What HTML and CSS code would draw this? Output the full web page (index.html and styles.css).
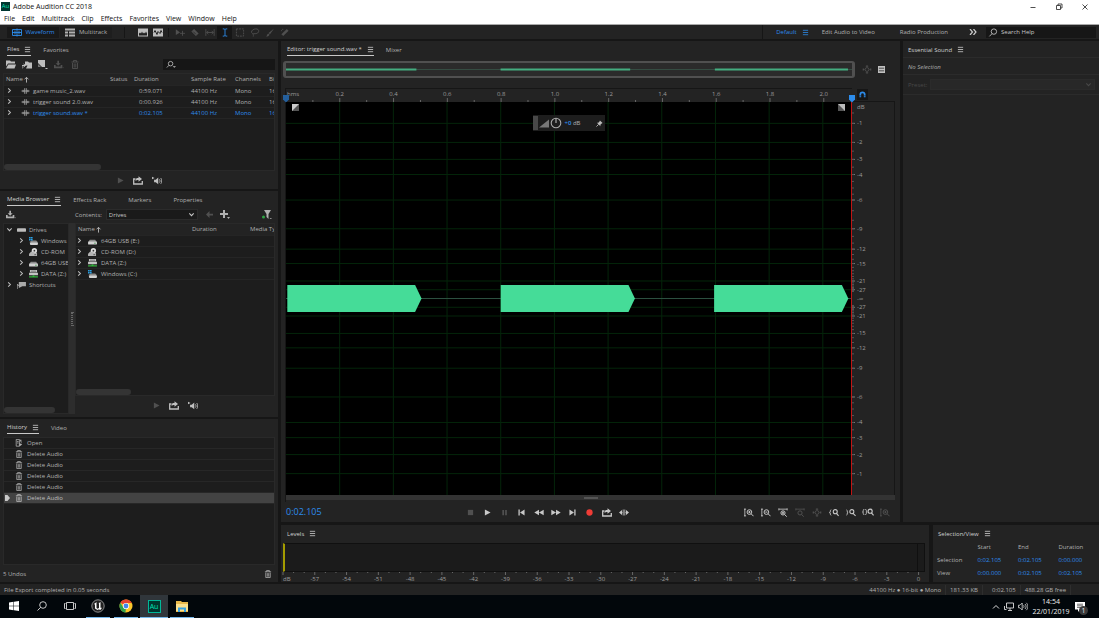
FILE: index.html
```html
<!DOCTYPE html>
<html lang="en">

<head>
  <meta charset="UTF-8" />
  <title>Adobe Audition CC 2018</title>
  <meta name="viewport" content="width=device-width, initial-scale=1.0" />
  <link rel="stylesheet" href="styles.css">
</head>

<body>
  <svg class="sprite" aria-hidden="true">
    <symbol id="i-menu" viewBox="0 0 8 8"><path d="M1 1.500h6M1 4h6M1 6.500h6" fill="none" stroke="currentColor" stroke-width=".9" /></symbol>
    <symbol id="i-chev" viewBox="0 0 8 8"><path d="M2.500 1.500L5 4 2.500 6.500" fill="none" stroke="currentColor" stroke-width="1.200" /></symbol>
    <symbol id="i-down" viewBox="0 0 8 8"><path d="M1.500 2.800L4 5.300l2.500-2.500" fill="none" stroke="currentColor" stroke-width="1.200" /></symbol>
    <symbol id="i-up" viewBox="0 0 8 8"><path d="M4 7.500V1.500M1.800 3.800L4 1.500l2.200 2.300" fill="none" stroke="currentColor" stroke-width="1.100" /></symbol>
    <symbol id="i-wave" viewBox="0 0 10 10"><path d="M0 5h10M2 3.500v3M4 1.500v7M6 1.500v7M8 3.500v3" fill="none" stroke="currentColor" stroke-width="1" /></symbol>
    <symbol id="i-waveform" viewBox="0 0 10 8"><path d="M.5 1h9v6h-9zM0 4h10M3 2v4M5 0v8M7 2v4" fill="none" stroke="currentColor" stroke-width=".9" /></symbol>
    <symbol id="i-tracks" viewBox="0 0 10 8"><path d="M0 0h10v2H0zM0 3h3v2H0zM4 3h6v2H4zM0 6h3v2H0zM4 6h6v2H4z" fill="currentColor" /></symbol>
    <symbol id="i-spectral" viewBox="0 0 10 8"><path d="M0 0h10v8H0z" fill="currentColor" /><path d="M1 5l1-1 1 1 1-2 1 2 1-1 1 1 1-2 1 2v2H1z" fill="#232323" /></symbol>
    <symbol id="i-pitch" viewBox="0 0 10 8"><path d="M0 0h10v8H0z" fill="currentColor" /><path d="M1 4l1-2 2 4 1-3 2 2 1-3 1 2" fill="none" stroke="#232323" /></symbol>
    <symbol id="i-move" viewBox="0 0 12 10"><path d="M1 1l5 4-5 3z" fill="currentColor" /><path d="M6 6h6M9 3v6" stroke="currentColor" /></symbol>
    <symbol id="i-razor" viewBox="0 0 10 10"><path d="M1 4l3-3 5 5-3 3z" fill="currentColor" /><path d="M3 4l3 3" stroke="#232323" stroke-width=".8" /></symbol>
    <symbol id="i-slip" viewBox="0 0 12 10"><path d="M1 1v8M11 1v8M2 5h8M4 3L2 5l2 2M8 3l2 2-2 2" fill="none" stroke="currentColor" /></symbol>
    <symbol id="i-ibeam" viewBox="0 0 10 10"><path d="M2.500 1H4l1 .7L6 1h1.500M5 1.500v7M2.500 9H4l1-.7 1 .7h1.500" fill="none" stroke="currentColor" /></symbol>
    <symbol id="i-marquee" viewBox="0 0 10 10"><path d="M1 1h8v8H1z" fill="none" stroke="currentColor" stroke-dasharray="2 1" /></symbol>
    <symbol id="i-lasso" viewBox="0 0 10 10"><path d="M3 6.500C-1 5 2 1 6 1s4 4 1 5-4-.5-4 1 .5 1 0 2.500" fill="none" stroke="currentColor" /></symbol>
    <symbol id="i-brush" viewBox="0 0 10 10"><path d="M9.500.500L5 7 3.500 5.500zM3 6l1.500 1.500C4 9 2 9.500.500 9.500 2 8.500 1.500 7 3 6z" fill="currentColor" /></symbol>
    <symbol id="i-heal" viewBox="0 0 10 10"><path d="M1 7l6-6 2 2-6 6z" fill="currentColor" /><path d="M1 3.500C1 1 3 1 4 2" fill="none" stroke="currentColor" stroke-dasharray="1 1" /></symbol>
    <symbol id="i-search" viewBox="0 0 10 10"><circle cx="6" cy="4" r="3" fill="none" stroke="currentColor" /><path d="M4 6.200L1 9.300" stroke="currentColor" /></symbol>
    <symbol id="i-find" viewBox="0 0 12 10"><circle cx="5.500" cy="4" r="2.700" fill="none" stroke="currentColor" /><path d="M3.500 6L1 8.700" stroke="currentColor" /><path d="M8 7h4l-2 2z" fill="currentColor" /></symbol>
    <symbol id="i-folder" viewBox="0 0 10 8"><path d="M0 0h4l1 1h4v2H2L0 6z" fill="currentColor" /><path d="M2.300 4H10L8.500 8H0z" fill="currentColor" /></symbol>
    <symbol id="i-import" viewBox="0 0 10 8"><path d="M3 1h3l1 1h3v6H4L5.500 5H3z" fill="currentColor" /><path d="M0 8V5h3M1.500 3.500L3.500 5 1.500 6.500" fill="none" stroke="currentColor" /></symbol>
    <symbol id="i-newfile" viewBox="0 0 10 9"><path d="M0 0h7v7H4L0 3z" fill="currentColor" /><path d="M7 8h3L8.500 9.500z" fill="currentColor" /><path d="M0 4l3 3H0z" fill="#777" /></symbol>
    <symbol id="i-insert" viewBox="0 0 12 9"><path d="M0 5h2v2h6V5h2v4H0zM4 0h2v3h2L5 6 2 3h2z" fill="currentColor" /><path d="M10 8h2l-1 1z" fill="currentColor" /></symbol>
    <symbol id="i-trash" viewBox="0 0 8 9"><path d="M.5 2h7M2.500 2V.5h3V2M1.500 3v5.500h5V3M3.200 3.500V7.500M4.800 3.500V7.500" fill="none" stroke="currentColor" stroke-width=".9" /></symbol>
    <symbol id="i-play" viewBox="0 0 8 8"><path d="M1 .5L7.500 4 1 7.500z" fill="currentColor" /></symbol>
    <symbol id="i-stop" viewBox="0 0 8 8"><path d="M1 1h6v6H1z" fill="currentColor" /></symbol>
    <symbol id="i-pause" viewBox="0 0 8 8"><path d="M1.500 1h2v6h-2zM4.700 1h2v6h-2z" fill="currentColor" /></symbol>
    <symbol id="i-prev" viewBox="0 0 8 8"><path d="M.5 .5h1.500v7H.5zM7.500 .5v7L2.300 4z" fill="currentColor" /></symbol>
    <symbol id="i-next" viewBox="0 0 8 8"><path d="M6 .5h1.500v7H6zM.5 .5v7L5.700 4z" fill="currentColor" /></symbol>
    <symbol id="i-rew" viewBox="0 0 10 8"><path d="M5 1.200v5.600L.3 4zM9.700 1.200v5.600L5 4z" fill="currentColor" /></symbol>
    <symbol id="i-fwd" viewBox="0 0 10 8"><path d="M.3 1.200v5.600L5 4zM5 1.200v5.600L9.700 4z" fill="currentColor" /></symbol>
    <symbol id="i-rec" viewBox="0 0 8 8"><circle cx="4" cy="4" r="3.600" fill="#f03c36" /></symbol>
    <symbol id="i-loop" viewBox="0 0 10 9"><path d="M2.500 3H.7v5h8.600V5" fill="none" stroke="currentColor" stroke-width="1.300" /><path d="M2.500 5c0-2.500 1-3 3-3V.300L9 3 5.500 5.700V4C4 4 3.500 4.300 2.500 5z" fill="currentColor" /></symbol>
    <symbol id="i-skip" viewBox="0 0 10 8"><path d="M0 4l3-2.500v5zM10 4L7 1.500v5z" fill="currentColor" /><path d="M2 4h1.500M6.500 4h2M4.200 1v6M5.800 1v6" stroke="currentColor" stroke-width=".8" /></symbol>
    <symbol id="i-speaker" viewBox="0 0 12 9"><path d="M0 0l3 1.500L0 3z" fill="currentColor" /><path d="M2.500 3.500h2L7.500 1v8L4.500 6.500h-2z" fill="currentColor" /><path d="M9 3c.8 1 .8 3 0 4M10.500 1.500c1.500 2 1.500 5 0 7" fill="none" stroke="currentColor" /></symbol>
    <symbol id="i-back" viewBox="0 0 8 8"><path d="M4 0v3h4v2H4v3L0 4z" fill="currentColor" /></symbol>
    <symbol id="i-plus" viewBox="0 0 10 9"><path d="M3 0h2v3h3v2H5v3H3V5H0V3h3zM7 7h3L8.500 9z" fill="currentColor" /></symbol>
    <symbol id="i-filter" viewBox="0 0 10 9"><path d="M2 0h7L6.500 4v5L4.500 7V4z" fill="currentColor" /><circle cx="1.500" cy="7" r="1.500" fill="#2fa544" /><path d="M7.500 8h2.500l-1.200 1z" fill="currentColor" /></symbol>
    <symbol id="i-drives" viewBox="0 0 10 6"><rect y="1" width="10" height="4" rx="1" fill="#bdbdbd" /></symbol>
    <symbol id="i-disk" viewBox="0 0 10 9"><path d="M2 3h6l2 3H0z" fill="#8b8b8b" /><rect y="5" width="10" height="3.500" rx="1" fill="#d2d2d2" /><path d="M7 7h1.500" stroke="#2d8f3a" /></symbol>
    <symbol id="i-win" viewBox="0 0 10 9"><path d="M3 4h5l2 2H0z" fill="#8b8b8b" /><rect x="1" y="6" width="9" height="3" rx="1" fill="#d2d2d2" /><path d="M0 0h1.800v1.800H0zM2.200 0H4v1.800H2.200zM0 2.200h1.800V4H0zM2.200 2.200H4V4H2.200z" fill="#2aa3e8" /></symbol>
    <symbol id="i-cd" viewBox="0 0 10 9"><circle cx="6" cy="3" r="3" fill="#dedede" /><circle cx="6" cy="3" r="1" fill="#333" /><path d="M0 6.500L2.500 4 9 6v3H0z" fill="#b4b4b4" /><path d="M6 7.500h2" stroke="#1f1f1f" stroke-width=".7" /></symbol>
    <symbol id="i-net" viewBox="0 0 10 9"><path d="M1 0h8v2.500H1zM0 3h10v3H0z" fill="#c4c4c4" /><path d="M2 1.300h6" stroke="#333" stroke-width=".6" /><path d="M4 6h2v1h4v1.500H0V7h4z" fill="#33b33d" /></symbol>
    <symbol id="i-shortcut" viewBox="0 0 10 9"><path d="M2 1h8v5H6L2 8z" fill="#a9a9a9" /><path d="M0 9V4l2 1" fill="none" stroke="#ccc" /></symbol>
    <symbol id="i-open" viewBox="0 0 9 10"><path d="M1 .500h4V9H1zM2 3h2M2 5h2" fill="none" stroke="currentColor" /><path d="M5.500 1h2v5M5 5l3.500 2L5 9.500z" fill="currentColor" /></symbol>
    <symbol id="i-zin" viewBox="0 0 12 10"><path d="M1 .500v9M0 1h2.500M0 9h2.500" stroke="currentColor" /><circle cx="6.500" cy="4.500" r="2.800" fill="none" stroke="currentColor" stroke-width="1.200" /><path d="M8.500 6.500l3 3M5.200 4.500h2.600M6.500 3.200v2.600" stroke="currentColor" stroke-width="1.200" /></symbol>
    <symbol id="i-zout" viewBox="0 0 12 10"><path d="M1 .500v9M0 1h2.500M0 9h2.500" stroke="currentColor" /><circle cx="6.500" cy="4.500" r="2.800" fill="none" stroke="currentColor" stroke-width="1.200" /><path d="M8.500 6.500l3 3M5.200 4.500h2.600" stroke="currentColor" stroke-width="1.200" /></symbol>
    <symbol id="i-zhin" viewBox="0 0 12 10"><path d="M1 1h10M1 0v2.500M11 0v2.500" stroke="currentColor" /><circle cx="6" cy="5.500" r="2.500" fill="none" stroke="currentColor" stroke-width="1.200" /><path d="M8 7.500l2.500 2.500M4.700 5.500h2.600M6 4.200v2.600" stroke="currentColor" stroke-width="1.200" /></symbol>
    <symbol id="i-zhout" viewBox="0 0 12 10"><path d="M1 1h10M1 0v2.500M11 0v2.500" stroke="currentColor" /><circle cx="6" cy="5.500" r="2.500" fill="none" stroke="currentColor" stroke-width="1.200" /><path d="M8 7.500l2.500 2.500" stroke="currentColor" stroke-width="1.200" /></symbol>
    <symbol id="i-zfull" viewBox="0 0 12 10"><circle cx="6" cy="5" r="2.300" fill="none" stroke="currentColor" /><path d="M6 0v2M6 8v2M1 5h2M9 5h2M4.500 1h3M4.500 9h3M1.500 3.500v3M10.500 3.500v3" stroke="currentColor" /></symbol>
    <symbol id="i-zl" viewBox="0 0 12 10"><path d="M2.500 1.500L1.500 3v1.500L.5 5l1 .5V7l1 1.500" fill="none" stroke="currentColor" /><circle cx="7.500" cy="4" r="2.400" fill="none" stroke="currentColor" stroke-width="1.300" /><path d="M9 6l2.500 3" stroke="currentColor" stroke-width="1.300" /></symbol>
    <symbol id="i-zr" viewBox="0 0 12 10"><path d="M.5 1.500l1 1.500v1.500l1 .5-1 .5V7l-1 1.500" fill="none" stroke="currentColor" /><circle cx="7" cy="4" r="2.400" fill="none" stroke="currentColor" stroke-width="1.300" /><path d="M8.500 6l3 3" stroke="currentColor" stroke-width="1.300" /></symbol>
    <symbol id="i-zs" viewBox="0 0 14 10"><path d="M2.500 1.500l-1 1.500v1.500L.5 5l1 .5V7l1 1.500M4 1.500L5 3v1.500l1 .5-1 .5V7L4 8.500" fill="none" stroke="currentColor" /><circle cx="9.500" cy="4" r="2.400" fill="none" stroke="currentColor" stroke-width="1.300" /><path d="M11 6l2.500 3" stroke="currentColor" stroke-width="1.300" /></symbol>
    <symbol id="i-list" viewBox="0 0 8 8"><path d="M0 0h8v8H0z" fill="#c0c0c0" /><path d="M1 2.500h6M1 5.500h6" stroke="#2a2a2a" stroke-width=".9" /></symbol>
    <symbol id="i-magnet" viewBox="0 0 8 8"><path d="M1.500 7V4a2.500 2.500 0 0 1 5 0v3" fill="none" stroke="currentColor" stroke-width="2" /><path d="M.2 5.500h2.600M5.200 5.500h2.600" stroke="#161616" stroke-width=".6" /></symbol>
    <symbol id="i-slope" viewBox="0 0 10 8"><path d="M0 8l10-8v8z" fill="#777" /></symbol>
    <symbol id="i-knob" viewBox="0 0 12 12"><circle cx="6" cy="6" r="4.800" fill="none" stroke="#aaa" stroke-width="1.100" /><path d="M6 1v5" stroke="#aaa" stroke-width="1.200" /></symbol>
    <symbol id="i-pin" viewBox="0 0 8 8"><path d="M4.500.5l3 3-1 .5-1.500 1.500V7L1 3h1.700L4.200 1.500z" fill="#bbb" /><path d="M3 5L.5 7.500" stroke="#bbb" /></symbol>
    <symbol id="i-marker" viewBox="0 0 8 8"><path d="M1 0h6v4.500L4 7.500 1 4.500z" fill="currentColor" /></symbol>
  </svg>

  <header class="titlebar">
    <span class="app-icon">Au</span>
    <span class="app-title">Adobe Audition CC 2018</span>
    <div class="win-controls">
      <button aria-label="Minimize"><svg width="8" height="8" viewBox="0 0 8 8"><path d="M1.500 4.500h5" stroke="#222" stroke-width=".8" /></svg></button>
      <button aria-label="Restore"><svg width="8" height="8" viewBox="0 0 8 8"><path d="M1.500 2.500h4v4h-4zM3 2.500V1h4v4H5.500" fill="none" stroke="#222" stroke-width=".8" /></svg></button>
      <button aria-label="Close"><svg width="8" height="8" viewBox="0 0 8 8"><path d="M1.500 1.500l5 5M6.500 1.500l-5 5" stroke="#222" stroke-width=".8" /></svg></button>
    </div>
  </header>

  <nav class="menubar">
    <a href="#">File</a>
    <a href="#">Edit</a>
    <a href="#">Multitrack</a>
    <a href="#">Clip</a>
    <a href="#">Effects</a>
    <a href="#">Favorites</a>
    <a href="#">View</a>
    <a href="#">Window</a>
    <a href="#">Help</a>
  </nav>

  <div class="toolbar">
    <div class="modes">
      <button class="mode active"><svg class="ic"><use href="#i-waveform" /></svg>Waveform</button>
      <button class="mode"><svg class="ic"><use href="#i-tracks" /></svg>Multitrack</button>
    </div>
    <div class="views">
      <button aria-label="Spectral frequency"><svg class="ic"><use href="#i-spectral" /></svg></button>
      <button aria-label="Spectral pitch"><svg class="ic"><use href="#i-pitch" /></svg></button>
    </div>
    <div class="tools">
      <button aria-label="Move" disabled><svg class="ic"><use href="#i-move" /></svg></button>
      <button aria-label="Razor" disabled><svg class="ic"><use href="#i-razor" /></svg></button>
      <button aria-label="Slip" disabled><svg class="ic"><use href="#i-slip" /></svg></button>
      <button aria-label="Time selection" class="active"><svg class="ic"><use href="#i-ibeam" /></svg></button>
      <button aria-label="Marquee" disabled><svg class="ic"><use href="#i-marquee" /></svg></button>
      <button aria-label="Lasso" disabled><svg class="ic"><use href="#i-lasso" /></svg></button>
      <button aria-label="Paintbrush" disabled><svg class="ic"><use href="#i-brush" /></svg></button>
      <button aria-label="Spot healing" disabled><svg class="ic"><use href="#i-heal" /></svg></button>
    </div>
    <div class="workspaces">
      <button class="active">Default<svg class="ic-s"><use href="#i-menu" /></svg></button>
      <button class="ws-video">Edit Audio to Video</button>
      <button class="ws-radio">Radio Production</button>
      <button class="ws-more" aria-label="More workspaces"><svg width="8" height="6" viewBox="0 0 8 6"><path d="M1 0l2.500 3L1 6M4.500 0L7 3 4.500 6" fill="none" stroke="#ccc" stroke-width="1.200" /></svg></button>
    </div>
    <label class="help-search"><svg class="ic"><use href="#i-search" /></svg><input type="text" placeholder="Search Help" aria-label="Search Help" /></label>
  </div>

  <main class="workspace">
    <div class="left">
      <section class="panel files">
        <div class="tabs">
          <button class="tab active">Files<svg class="ic-s"><use href="#i-menu" /></svg></button>
          <button class="tab">Favorites</button>
        </div>
        <div class="file-tools">
          <button aria-label="Open file"><svg class="ic"><use href="#i-folder" /></svg></button>
          <button aria-label="Import file"><svg class="ic"><use href="#i-import" /></svg></button>
          <button aria-label="New file"><svg class="ic"><use href="#i-newfile" /></svg></button>
          <button aria-label="Insert" disabled><svg class="ic"><use href="#i-insert" /></svg></button>
          <button aria-label="Delete" disabled><svg class="ic"><use href="#i-trash" /></svg></button>
          <label class="file-search"><svg class="ic"><use href="#i-find" /></svg><input type="text" aria-label="Filter files" /></label>
        </div>
        <div class="list">
          <table class="file-table">
            <colgroup><col class="c-name"><col class="c-status"><col class="c-dur"><col class="c-rate"><col class="c-chan"><col></colgroup>
            <thead>
              <tr><th>Name<svg class="ic-s"><use href="#i-up" /></svg></th><th>Status</th><th>Duration</th><th>Sample Rate</th><th>Channels</th><th>Bi</th></tr>
            </thead>
            <tbody>
              <tr><td><svg class="ic-s"><use href="#i-chev" /></svg><svg class="ic-w"><use href="#i-wave" /></svg>game music_2.wav</td><td></td><td class="num">0:59.071</td><td>44100 Hz</td><td>Mono</td><td>16</td></tr>
              <tr><td><svg class="ic-s"><use href="#i-chev" /></svg><svg class="ic-w"><use href="#i-wave" /></svg>trigger sound 2.0.wav</td><td></td><td class="num">0:00.926</td><td>44100 Hz</td><td>Mono</td><td>16</td></tr>
              <tr class="current"><td><svg class="ic-s"><use href="#i-chev" /></svg><svg class="ic-w"><use href="#i-wave" /></svg>trigger sound.wav *</td><td></td><td class="num">0:02.105</td><td>44100 Hz</td><td>Mono</td><td>16</td></tr>
            </tbody>
          </table>
          <div class="hscroll hscroll-files"></div>
        </div>
        <div class="mini-transport">
          <button aria-label="Play" disabled><svg class="ic-s"><use href="#i-play" /></svg></button>
          <button aria-label="Loop"><svg class="ic"><use href="#i-loop" /></svg></button>
          <button aria-label="Auto-play"><svg class="ic"><use href="#i-speaker" /></svg></button>
        </div>
      </section>

      <section class="panel media">
        <div class="tabs">
          <button class="tab active">Media Browser<svg class="ic-s"><use href="#i-menu" /></svg></button>
          <button class="tab">Effects Rack</button>
          <button class="tab tab-wide">Markers</button>
          <button class="tab tab-wide">Properties</button>
        </div>
        <div class="media-tools">
          <button aria-label="Import"><svg class="ic"><use href="#i-insert" /></svg></button>
          <label for="contents">Contents:</label>
          <div class="select-wrap">
            <select id="contents"><option>Drives</option></select>
            <svg class="ic-s"><use href="#i-down" /></svg>
          </div>
          <button aria-label="Back" disabled><svg class="ic-s"><use href="#i-back" /></svg></button>
          <button aria-label="Add shortcut" class="add"><svg class="ic"><use href="#i-plus" /></svg></button>
          <button aria-label="Filter" class="filter"><svg class="ic"><use href="#i-filter" /></svg></button>
        </div>
        <div class="media-body">
          <div class="tree">
            <ul>
              <li><svg class="ic-s"><use href="#i-down" /></svg><svg class="ic-d"><use href="#i-drives" /></svg>Drives</li>
              <li class="sub"><svg class="ic-s"><use href="#i-chev" /></svg><svg class="ic-d"><use href="#i-win" /></svg>Windows</li>
              <li class="sub"><svg class="ic-s"><use href="#i-chev" /></svg><svg class="ic-d"><use href="#i-cd" /></svg>CD-ROM</li>
              <li class="sub"><svg class="ic-s"><use href="#i-chev" /></svg><svg class="ic-d"><use href="#i-disk" /></svg>64GB USB</li>
              <li class="sub"><svg class="ic-s"><use href="#i-chev" /></svg><svg class="ic-d"><use href="#i-net" /></svg>DATA (Z:)</li>
              <li><svg class="ic-s"><use href="#i-chev" /></svg><svg class="ic-d"><use href="#i-shortcut" /></svg>Shortcuts</li>
            </ul>
            <div class="hscroll hscroll-tree"></div>
          </div>
          <div class="splitter"><span></span></div>
          <div class="media-right">
            <div class="list">
              <table class="media-table">
                <colgroup><col class="c-mname"><col class="c-mdur"><col></colgroup>
                <thead>
                  <tr><th>Name<svg class="ic-s"><use href="#i-up" /></svg></th><th>Duration</th><th>Media Ty</th></tr>
                </thead>
                <tbody>
                  <tr><td><svg class="ic-s"><use href="#i-chev" /></svg><svg class="ic-d"><use href="#i-disk" /></svg>64GB USB (E:)</td><td></td><td></td></tr>
                  <tr><td><svg class="ic-s"><use href="#i-chev" /></svg><svg class="ic-d"><use href="#i-cd" /></svg>CD-ROM (D:)</td><td></td><td></td></tr>
                  <tr><td><svg class="ic-s"><use href="#i-chev" /></svg><svg class="ic-d"><use href="#i-net" /></svg>DATA (Z:)</td><td></td><td></td></tr>
                  <tr><td><svg class="ic-s"><use href="#i-chev" /></svg><svg class="ic-d"><use href="#i-win" /></svg>Windows (C:)</td><td></td><td></td></tr>
                </tbody>
              </table>
              <div class="hscroll hscroll-media"></div>
            </div>
            <div class="mini-transport">
              <button aria-label="Play" disabled><svg class="ic-s"><use href="#i-play" /></svg></button>
              <button aria-label="Loop"><svg class="ic"><use href="#i-loop" /></svg></button>
              <button aria-label="Auto-play"><svg class="ic"><use href="#i-speaker" /></svg></button>
            </div>
          </div>
        </div>
      </section>

      <section class="panel history">
        <div class="tabs">
          <button class="tab active">History<svg class="ic-s"><use href="#i-menu" /></svg></button>
          <button class="tab">Video</button>
        </div>
        <ul class="list history-list">
          <li><svg class="ic-h"><use href="#i-open" /></svg>Open</li>
          <li><svg class="ic-h"><use href="#i-trash" /></svg>Delete Audio</li>
          <li><svg class="ic-h"><use href="#i-trash" /></svg>Delete Audio</li>
          <li><svg class="ic-h"><use href="#i-trash" /></svg>Delete Audio</li>
          <li><svg class="ic-h"><use href="#i-trash" /></svg>Delete Audio</li>
          <li class="selected"><svg class="ic-h"><use href="#i-trash" /></svg>Delete Audio</li>
        </ul>
        <div class="history-foot">
          <span>5 Undos</span>
          <button aria-label="Delete history"><svg class="ic-h"><use href="#i-trash" /></svg></button>
        </div>
      </section>
    </div>

    <div class="main">
      <div class="main-top">
        <section class="panel editor">
          <div class="tabs">
            <button class="tab active">Editor: trigger sound.wav *<svg class="ic-s"><use href="#i-menu" /></svg></button>
            <button class="tab">Mixer</button>
          </div>
          <div class="overview-row">
            <div class="overview">
              <svg viewBox="0 0 2105 12" preserveAspectRatio="none">
                <path d="M0 6H2105" stroke="#3d6454" stroke-width="1" />
                <path d="M0 6H485M798 6H1280M1595 6H2090" stroke="#44ad80" stroke-width="2" />
              </svg>
            </div>
            <button aria-label="Zoom out full" disabled><svg class="ic"><use href="#i-zfull" /></svg></button>
            <button aria-label="Show list"><svg class="ic-s"><use href="#i-list" /></svg></button>
          </div>
          <div class="stage">
            <div class="ruler">
              <svg id="ruler"></svg>
              <svg class="marker marker-start"><use href="#i-marker" /></svg>
              <svg class="marker marker-end"><use href="#i-marker" /></svg>
            </div>
            <div class="ruler-side"><button class="snap" aria-label="Snapping"><svg class="ic-s"><use href="#i-magnet" /></svg></button></div>
            <div class="wave">
              <svg id="wave" viewBox="0 0 2105 394" preserveAspectRatio="none"></svg>
              <svg class="fade fade-in" viewBox="0 0 7 7"><path d="M0 0h7v7H0z" fill="#555" /><path d="M0 0h7L0 7z" fill="#ccc" /></svg>
              <svg class="fade fade-out" viewBox="0 0 7 7"><path d="M0 0h7v7H0z" fill="#555" /><path d="M0 0h7v7z" fill="#bbb" /></svg>
              <div class="hud">
                <span class="hud-grip"></span>
                <svg class="ic"><use href="#i-slope" /></svg>
                <svg class="ic-k"><use href="#i-knob" /></svg>
                <span class="gain"><b>+0</b> dB</span>
                <svg class="ic-s pin"><use href="#i-pin" /></svg>
              </div>
            </div>
            <svg id="dbscale"></svg>
            <div class="zoombar"><span></span></div>
          </div>
          <div class="transport">
            <output class="time">0:02.105</output>
            <div class="keys">
              <button aria-label="Stop" disabled><svg class="ic-s"><use href="#i-stop" /></svg></button>
              <button aria-label="Play"><svg class="ic-s"><use href="#i-play" /></svg></button>
              <button aria-label="Pause" disabled><svg class="ic-s"><use href="#i-pause" /></svg></button>
              <button aria-label="Previous"><svg class="ic-s"><use href="#i-prev" /></svg></button>
              <button aria-label="Rewind"><svg class="ic"><use href="#i-rew" /></svg></button>
              <button aria-label="Fast forward"><svg class="ic"><use href="#i-fwd" /></svg></button>
              <button aria-label="Next"><svg class="ic-s"><use href="#i-next" /></svg></button>
              <button aria-label="Record"><svg class="ic-s"><use href="#i-rec" /></svg></button>
              <button aria-label="Loop playback"><svg class="ic"><use href="#i-loop" /></svg></button>
              <button aria-label="Skip selection"><svg class="ic"><use href="#i-skip" /></svg></button>
            </div>
            <div class="zooms">
              <button aria-label="Zoom in amplitude"><svg class="ic"><use href="#i-zin" /></svg></button>
              <button aria-label="Zoom out amplitude"><svg class="ic"><use href="#i-zout" /></svg></button>
              <button aria-label="Zoom in time"><svg class="ic"><use href="#i-zhin" /></svg></button>
              <button aria-label="Zoom out time" disabled><svg class="ic"><use href="#i-zhout" /></svg></button>
              <button aria-label="Zoom full" disabled><svg class="ic"><use href="#i-zfull" /></svg></button>
              <button aria-label="Zoom at in point"><svg class="ic"><use href="#i-zl" /></svg></button>
              <button aria-label="Zoom at out point"><svg class="ic"><use href="#i-zr" /></svg></button>
              <button aria-label="Zoom to selection"><svg class="ic-k"><use href="#i-zs" /></svg></button>
              <button aria-label="Zoom reset" disabled><svg class="ic"><use href="#i-zin" /></svg></button>
            </div>
          </div>
        </section>

        <section class="panel essential">
          <div class="tabs">
            <button class="tab title">Essential Sound<svg class="ic-s"><use href="#i-menu" /></svg></button>
          </div>
          <p class="no-selection">No Selection</p>
          <div class="preset">
            <label for="preset">Preset:</label>
            <div class="select-wrap">
              <select id="preset" disabled><option></option></select>
              <svg class="ic-s"><use href="#i-down" /></svg>
            </div>
          </div>
        </section>
      </div>

      <div class="main-bottom">
        <section class="panel levels">
          <div class="tabs">
            <button class="tab title">Levels<svg class="ic-s"><use href="#i-menu" /></svg></button>
          </div>
          <div class="meter"></div>
          <svg id="levels"></svg>
        </section>

        <section class="panel selview">
          <div class="tabs">
            <button class="tab title">Selection/View<svg class="ic-s"><use href="#i-menu" /></svg></button>
          </div>
          <table>
            <thead>
              <tr><td></td><th>Start</th><th>End</th><th>Duration</th></tr>
            </thead>
            <tbody>
              <tr><th>Selection</th><td>0:02.105</td><td>0:02.105</td><td>0:00.000</td></tr>
              <tr><th>View</th><td>0:00.000</td><td>0:02.105</td><td>0:02.105</td></tr>
            </tbody>
          </table>
        </section>
      </div>
    </div>
  </main>

  <footer class="statusbar">
    <span class="message">File Export completed in 0.05 seconds</span>
    <span class="cell">44100 Hz ● 16-bit ● Mono</span>
    <span class="cell">181.33 KB</span>
    <span class="cell cell-time">0:02.105</span>
    <span class="cell">488.28 GB free</span>
  </footer>

  <div class="taskbar">
    <button aria-label="Start"><svg width="10" height="10" viewBox="0 0 10 10"><path d="M0 1.500l4.500-.7v4H0zM5 .7L10 0v4.800H5zM0 5.300h4.500v4L0 8.600zM5 5.300h5V10l-5-.7z" fill="#fff" /></svg></button>
    <button aria-label="Search"><svg width="10" height="10" viewBox="0 0 10 10"><circle cx="6" cy="4" r="3.300" fill="none" stroke="#ddd" stroke-width=".9" /><path d="M3.700 6.300L.5 9.500" stroke="#ddd" stroke-width=".9" /></svg></button>
    <button aria-label="Task view"><svg width="12" height="10" viewBox="0 0 12 10"><path d="M2.500 1.500h7v7h-7zM1.500 2.500H.5v5h1M10.500 2.500h1v5h-1" fill="none" stroke="#ddd" stroke-width=".9" /></svg></button>
    <button class="open" aria-label="Unreal"><svg width="14" height="14" viewBox="0 0 14 14"><circle cx="7" cy="7" r="6.200" fill="#222" stroke="#aaa" stroke-width=".8" /><path d="M3 5.500C3.500 4 5 3.500 6 3.500L5.500 4v5l1 .7L8 9V4.500L7.500 4l2.500-.8-.5.8v4.500l.5.500 1-.6C10.500 10 9.500 10.500 9 11l-1-.8-1.500.9L4 9.500V5.300z" fill="#fff" /></svg></button>
    <button class="open" aria-label="Chrome"><svg width="14" height="14" viewBox="0 0 14 14"><circle cx="7" cy="7" r="6.500" fill="#fbc62c" /><path d="M7 7L1.400 3.700A6.500 6.500 0 0 1 12.800 4H7z" fill="#e6432f" /><path d="M7 7v.5L6.500 13.500A6.500 6.500 0 0 1 1.400 3.700L4.300 8.500z" fill="#2da14d" /><circle cx="7" cy="7" r="3.100" fill="#fff" /><circle cx="7" cy="7" r="2.400" fill="#4285e8" /></svg></button>
    <button class="open focused" aria-label="Audition"><span class="au-tile">Au</span></button>
    <button class="open" aria-label="Explorer"><svg width="14" height="12" viewBox="0 0 14 12"><path d="M1 1h5l1 1h6v10H1z" fill="#e8b84a" /><path d="M1 4h12v7H1z" fill="#fbe08d" /><path d="M3 12V7.500h8V12H9V9.500H5V12z" fill="#3aa2e0" /></svg></button>
    <div class="tray">
      <svg width="8" height="8" viewBox="0 0 8 8"><path d="M1 5.500l3-3 3 3" fill="none" stroke="#ddd" /></svg>
      <svg width="10" height="9" viewBox="0 0 10 9"><path d="M2.500 1h7v5h-7zM4 8.500h4M6 6v2.500M.5 4v3.500h2" fill="none" stroke="#ddd" stroke-width=".9" /></svg>
      <svg width="10" height="9" viewBox="0 0 10 9"><path d="M.5 3.200h1.500L4.200 1v7L2 5.800H.5zM5.500 3.200c.7.800.7 1.800 0 2.600M7 2c1.400 1.500 1.400 3.500 0 5M8.300.8c2 2.200 2 5.200 0 7.400" fill="none" stroke="#ddd" stroke-width=".8" /></svg>
      <div class="clock"><span>14:54</span><span>22/01/2019</span></div>
      <div class="notify">
        <svg width="10" height="10" viewBox="0 0 10 10"><path d="M0 0h10v7.500H5L3 10V7.500H0z" fill="#fff" /><path d="M2 2.200h6M2 3.800h6M2 5.400h4" stroke="#111" stroke-width=".6" /></svg>
        <span class="badge">1</span>
      </div>
    </div>
  </div>

  <script src="script.js"></script>
</body>

</html>
```
FILE: styles.css
```css
* {
  box-sizing: border-box;
}

body {
  margin: 0;
  height: 100vh;
  display: flex;
  flex-direction: column;
  overflow: hidden;
  background: #161616;
  font-family: "Open Sans", "Noto Sans", sans-serif;
  font-size: 6px;
  line-height: 10px;
  color: #b0b0b0;
}

button,
input,
select {
  margin: 0;
  padding: 0;
  border: none;
  background: none;
  color: inherit;
  font: inherit;
}

button {
  display: flex;
  align-items: center;
  justify-content: center;
}

button:disabled {
  color: #505050;
}

ul,
p {
  margin: 0;
  padding: 0;
  list-style: none;
}

svg {
  display: block;
  flex: none;
}

table {
  width: 100%;
  border-collapse: collapse;
  table-layout: fixed;
}

th,
td {
  padding: 0;
  font-weight: normal;
  text-align: left;
  white-space: nowrap;
}

.sprite {
  position: absolute;
  width: 0;
  height: 0;
}

.ic {
  width: 10px;
  height: 9px;
}

.ic-s {
  width: 7px;
  height: 7px;
}

.ic-w,
.ic-d {
  width: 9px;
  height: 8px;
}

.ic-h {
  width: 8px;
  height: 8px;
}

.ic-k {
  width: 12px;
  height: 12px;
}

/* window chrome */

.titlebar {
  display: flex;
  align-items: center;
  height: 13px;
  padding-left: 1px;
  background: #fff;
  color: #111;
  font-size: 7px;
}

.app-icon {
  width: 9px;
  height: 9px;
  margin-right: 3px;
  background: #00362f;
  color: #00e4bb;
  font-size: 6px;
  line-height: 9px;
  text-align: center;
}

.win-controls {
  display: flex;
  margin-left: auto;
  padding-right: 1px;
}

.win-controls button {
  width: 26px;
}

.menubar {
  display: flex;
  gap: 7px;
  height: 12px;
  padding-left: 4px;
  background: #fff;
  border-bottom: 1px solid #a9a9a9;
  font-size: 7px;
  line-height: 11px;
}

.menubar a {
  color: #111;
  text-decoration: none;
}

.toolbar {
  display: flex;
  align-items: center;
  height: 14px;
  margin-bottom: 2px;
  padding: 0 3px 0 7px;
  background: #232323;
}

.modes {
  display: flex;
  gap: 1px;
  padding-right: 12px;
  border-right: 1px solid #161616;
}

.mode {
  gap: 4px;
  width: 52px;
  height: 11px;
  background: #1e1e1e;
}

.mode.active {
  background: #191919;
}

.active .ic,
.mode.active,
.workspaces .active {
  color: #2d8ceb;
}

.views {
  display: flex;
  gap: 5px;
  margin-left: 13px;
  padding-right: 5px;
  border-right: 1px solid #161616;
  color: #bdbdbd;
}

.tools {
  display: flex;
  margin-left: 3px;
}

.tools button {
  width: 15px;
  height: 13px;
}

.tools .active {
  background: #161616;
}

.workspaces {
  display: flex;
  align-items: center;
  height: 14px;
  margin-left: auto;
  border-left: 1px solid #161616;
}

.workspaces button {
  justify-content: flex-start;
  padding-left: 13px;
}

.workspaces .ic-s {
  margin-left: 5px;
}

.workspaces .ws-radio {
  padding-left: 25px;
}

.workspaces .ws-more {
  padding: 0 5px 0 21px;
}

.help-search {
  display: flex;
  align-items: center;
  gap: 3px;
  width: 110px;
  height: 11px;
  margin-left: 4px;
  padding-left: 2px;
  background: #161616;
  color: #bdbdbd;
}

.help-search input {
  flex: 1;
  min-width: 0;
}

.help-search input::placeholder {
  color: #c8c8c8;
}

/* panels */

.workspace {
  flex: 1;
  display: flex;
  gap: 3px;
  min-height: 0;
}

.left {
  display: flex;
  flex-direction: column;
  gap: 2px;
  width: 278px;
  flex: none;
}

.main {
  flex: 1;
  display: flex;
  flex-direction: column;
  gap: 3px;
  min-width: 0;
}

.main-top {
  flex: 1;
  display: flex;
  gap: 3px;
  min-height: 0;
}

.main-bottom {
  display: flex;
  gap: 4px;
  height: 57px;
}

.panel {
  display: flex;
  flex-direction: column;
  min-width: 0;
  background: #232323;
}

.tabs {
  display: flex;
  gap: 12px;
  height: 15px;
  flex: none;
  padding-left: 7px;
}

.tab {
  height: 15px;
  padding-top: 2px;
  white-space: nowrap;
}

.tab.active {
  border-bottom: 1px solid #c8c8c8;
  color: #d0d0d0;
}

.tab.title {
  color: #d0d0d0;
}

.tab .ic-s {
  margin-left: 5px;
}

.list {
  position: relative;
  flex: 1;
  min-height: 0;
  overflow: hidden;
  background: #1d1d1d;
  border: 1px solid #292929;
}

/* bare scroll thumbs along the lower edge of the lists */
.hscroll {
  position: absolute;
  left: 0;
  bottom: 0;
  height: 6px;
  border-radius: 3px;
  background: #343434;
}

.hscroll-files {
  width: 97px;
}

.hscroll-tree {
  width: 51px;
}

.hscroll-media {
  width: 55px;
}

.mini-transport {
  display: flex;
  align-items: center;
  justify-content: center;
  gap: 9px;
  height: 18px;
  flex: none;
  color: #c0c0c0;
}

/* files */

.files {
  flex: none;
  height: 148px;
}

.file-tools {
  display: flex;
  align-items: center;
  gap: 5px;
  height: 17px;
  padding: 0 3px 0 5px;
  color: #bdbdbd;
}

.file-tools button {
  width: 11px;
}

.file-search {
  display: flex;
  align-items: center;
  width: 112px;
  height: 11px;
  margin-left: auto;
  padding-left: 3px;
  background: #161616;
}

.file-search input {
  flex: 1;
  min-width: 0;
}

.files .list {
  margin: 0 3px;
}

.file-table tr,
.media-table tr {
  height: 11px;
  border-bottom: 1px solid #252525;
}

.file-table thead,
.media-table thead {
  background: #232323;
}

.file-table th:first-child,
.media-table th:first-child {
  padding-left: 2px;
}

th .ic-s {
  display: inline-block;
  vertical-align: middle;
}

td .ic-s,
td .ic-w,
td .ic-d {
  display: inline-block;
  vertical-align: middle;
}

td .ic-s {
  margin: 0 8px 0 2px;
  color: #c0c0c0;
}

.ic-w {
  margin-right: 3px;
  color: #b0b0b0;
}

.c-name {
  width: 106px;
}

.c-status {
  width: 24px;
}

.c-dur {
  width: 57px;
}

.c-rate {
  width: 44px;
}

.c-chan {
  width: 34px;
}

.file-table .num {
  padding-left: 5px;
}

.current {
  color: #2d8ceb;
}

/* media browser */

.media {
  flex: none;
  height: 226px;
}

.media .tab-wide {
  margin-left: 10px;
}

.media-tools {
  display: flex;
  align-items: center;
  height: 17px;
  padding: 0 6px;
}

.media-tools label {
  margin: 0 4px 0 59px;
}

.media-tools .select-wrap {
  width: 92px;
  margin-right: 8px;
}

.media-tools .add {
  margin-left: 7px;
}

.media-tools .filter {
  margin-left: auto;
}

.select-wrap {
  display: flex;
  align-items: center;
  height: 11px;
  background: #1a1a1a;
  border: 1px solid #2b2b2b;
  color: #c8c8c8;
}

.select-wrap select {
  flex: 1;
  min-width: 0;
  appearance: none;
  padding-left: 2px;
}

.select-wrap .ic-s {
  margin-right: 2px;
}

.media-body {
  flex: 1;
  display: flex;
  min-height: 0;
  padding: 0 3px 3px;
}

.tree {
  position: relative;
  width: 66px;
  overflow: hidden;
  background: #1d1d1d;
  border: 1px solid #292929;
}

.tree li {
  display: flex;
  align-items: center;
  height: 11px;
  padding-left: 2px;
  white-space: nowrap;
}

.tree .sub {
  padding-left: 14px;
}

.tree .ic-s {
  margin-right: 4px;
  color: #c0c0c0;
}

.tree .ic-d {
  margin-right: 3px;
}

.splitter {
  display: flex;
  align-items: center;
  justify-content: center;
  width: 6px;
  background: #2d2d2d;
}

.splitter span {
  width: 2px;
  height: 14px;
  border: 1px dotted #666;
}

.media-right {
  flex: 1;
  display: flex;
  flex-direction: column;
  min-width: 0;
}

.media-table td .ic-s {
  margin: 0 5px 0 0;
}

.media-table td .ic-d {
  margin-right: 4px;
}

.c-mname {
  width: 116px;
}

.c-mdur {
  width: 58px;
}

/* history */

.history {
  flex: 1;
  min-height: 0;
}

.history-list {
  margin: 3px 3px 0;
}

.history-list li {
  position: relative;
  display: flex;
  align-items: center;
  gap: 4px;
  height: 11px;
  padding-left: 11px;
  border-bottom: 1px solid #272727;
}

.history-list .selected {
  background: #434343;
  color: #bdbdbd;
}

.selected::before {
  content: "";
  position: absolute;
  left: 1px;
  width: 5px;
  height: 6px;
  background: #c8c8c8;
  clip-path: polygon(0 0, 50% 0, 100% 50%, 50% 100%, 0 100%);
}

.history-foot {
  display: flex;
  align-items: center;
  justify-content: space-between;
  height: 17px;
  padding: 0 6px 0 3px;
}

/* editor */

.editor {
  flex: 1;
  padding: 0 5px 0 2px;
}

.editor .tabs {
  padding-left: 4px;
}

.overview-row {
  display: flex;
  align-items: center;
  gap: 6px;
  height: 27px;
  margin-bottom: 5px;
  padding-right: 10px;
}

.overview {
  flex: 1;
  height: 17px;
  margin-right: 1px;
  padding: 1px 0;
  background: #2b2b2b;
  border: 2px solid #505050;
  border-width: 2px 3px;
  border-radius: 3px;
}

.overview svg {
  width: 100%;
  height: 100%;
}

.stage {
  flex: 1;
  display: grid;
  grid-template-columns: 1fr 43px;
  grid-template-rows: 14px 1fr 7px;
  min-height: 0;
  margin-left: 2px;
  border-left: 1px solid #161616;
}

.ruler,
.wave {
  position: relative;
  min-width: 0;
  min-height: 0;
}

.ruler {
  border-top: 1px solid #161616;
}

.ruler > svg:first-child,
.wave > svg:first-child,
#dbscale {
  width: 100%;
  height: 100%;
}

.ruler-side {
  padding: 1px 0 0 5px;
  border-bottom: 1px solid #161616;
}

.snap {
  width: 11px;
  height: 11px;
  background: #161616;
  color: #2d8ceb;
}

.marker {
  position: absolute;
  bottom: -1px;
  width: 8px;
  height: 8px;
}

.marker-start {
  left: -4px;
  color: #245f9c;
}

.marker-end {
  right: -4px;
  z-index: 1;
  color: #2d8ceb;
}

.wave {
  background: #000;
  border-right: 1px solid #c01414;
}

.fade {
  position: absolute;
  top: 2px;
  width: 7px;
  height: 7px;
}

.fade-in {
  left: 6px;
}

.fade-out {
  right: 6px;
}

.hud {
  position: absolute;
  top: 13px;
  left: 50%;
  display: flex;
  align-items: center;
  gap: 1px;
  width: 72px;
  height: 16px;
  transform: translateX(-50%);
  background: #1d1d1d;
}

.hud-grip {
  width: 5px;
  height: 14px;
  background: #484848;
}

.gain {
  margin-left: 2px;
}

.gain b {
  color: #2d8ceb;
  font-weight: 600;
}

.hud .pin {
  margin: 0 2px 0 auto;
}

#dbscale {
  border-right: 1px solid #161616;
}

.zoombar {
  grid-column: 1 / 3;
  display: flex;
  align-items: center;
  justify-content: center;
  height: 5px;
  background: #333;
}

.zoombar span {
  width: 14px;
  height: 2px;
  background: #555;
}

.transport {
  display: flex;
  align-items: center;
  height: 20px;
  padding-left: 3px;
}

.time {
  width: 176px;
  color: #2d8ceb;
  font-size: 9px;
}

.keys,
.zooms {
  display: flex;
  color: #c8c8c8;
}

.keys button,
.zooms button {
  width: 17px;
}

.zooms {
  margin: 0 2px 0 auto;
}

svg text {
  fill: #9c9c9c;
  font-size: 6px;
}

/* essential sound */

.essential {
  width: 196px;
  flex: none;
}

.essential .tabs {
  padding-left: 5px;
}

.no-selection {
  height: 18px;
  margin-top: 1px;
  padding-left: 5px;
  border-top: 1px solid #2b2b2b;
  border-bottom: 1px solid #2b2b2b;
  font-style: italic;
  line-height: 18px;
}

.preset {
  display: flex;
  align-items: center;
  gap: 3px;
  height: 20px;
  padding: 0 4px 0 5px;
  border-bottom: 1px solid #2b2b2b;
  color: #484848;
}

.preset .select-wrap {
  flex: 1;
  background: #282828;
  color: #484848;
}

/* levels and selection */

.levels {
  flex: 1;
  padding: 0 4px 0 2px;
}

.levels .tabs {
  padding-left: 4px;
}

.meter {
  height: 29px;
  margin-top: 3px;
  background: linear-gradient(#101010, #101010) right 6px top / 1px 100% no-repeat #1b1b1b;
  border: 1px solid #101010;
  border-left: 2px solid #a39b00;
}

#levels {
  width: 100%;
  height: 10px;
  overflow: visible;
}

.selview {
  width: 166px;
  flex: none;
}

.selview .tabs {
  padding-left: 5px;
}

.selview table {
  padding-left: 4px;
  border-collapse: separate;
  border-spacing: 0;
}

.selview tr {
  height: 13px;
}

.selview tbody td {
  color: #2d8ceb;
}

/* footer bars */

.statusbar {
  display: flex;
  align-items: center;
  height: 11px;
  margin-top: 2px;
  padding: 0 28px 0 4px;
  background: #232323;
}

.message {
  margin-right: auto;
}

.cell {
  padding: 0 4px;
  border-right: 1px solid #2e2e2e;
}

.cell-time {
  padding-left: 9px;
}

.taskbar {
  display: flex;
  height: 23px;
  background: #02070b;
  color: #f0f0f0;
}

.taskbar button {
  width: 28px;
  border-bottom: 1px solid transparent;
}

.taskbar .open {
  width: 24px;
  margin: 0 2px;
  border-bottom-color: #76b9ed;
}

.taskbar .focused {
  width: 28px;
  margin: 0;
  background: #30363b;
}

.au-tile {
  width: 13px;
  height: 13px;
  background: #00362f;
  border: 1px solid #00b899;
  color: #00e4bb;
  font-size: 7px;
  line-height: 11px;
  text-align: center;
}

.tray {
  display: flex;
  align-items: center;
  gap: 4px;
  margin-left: auto;
  padding-right: 14px;
}

.clock {
  display: flex;
  flex-direction: column;
  width: 38px;
  font-size: 7px;
  line-height: 10px;
  text-align: center;
}

.notify {
  position: relative;
  margin-left: 1px;
}

.badge {
  position: absolute;
  left: 4px;
  top: 4px;
  width: 9px;
  height: 9px;
  border-radius: 50%;
  background: #3a3a3a;
  font-size: 7px;
  line-height: 9px;
  text-align: center;
}
```
FILE: script.js
```js
const NS = 'http://www.w3.org/2000/svg';
const LENGTH = 2.105;

const add = (parent, tag, attrs, text) => {
  const el = document.createElementNS(NS, tag);
  for (const k in attrs) el.setAttribute(k, attrs[k]);
  if (text) el.textContent = text;
  parent.appendChild(el);
};

// time ruler
const ruler = document.getElementById('ruler');
add(ruler, 'text', { x: 1, y: 7 }, 'hms');
for (let i = 1; i <= 20; i++) {
  const x = (i / 10 / LENGTH * 100) + '%';
  const major = i % 2 === 0;
  add(ruler, 'line', { x1: x, x2: x, y1: major ? 9 : 11, y2: 13, stroke: '#686868' });
  if (major) add(ruler, 'text', { x, y: 7, 'text-anchor': 'middle' }, (i / 10).toFixed(1));
}

// amplitude of a dB value as a fraction of the height, above and below the middle
const level = (db, sign) => 0.5 - sign * 0.5 * Math.pow(10, db / 20);

const wave = document.getElementById('wave');
const gridLine = (x1, y1, x2, y2) =>
  add(wave, 'line', { x1, y1, x2, y2, stroke: '#04250a', 'vector-effect': 'non-scaling-stroke' });
for (let t = 200; t <= 2000; t += 200) gridLine(t, 0, t, 394);

const labels = [-1, -2, -3, -4, -6, -9, -12, -15, -21, -27];
const scale = document.getElementById('dbscale');
add(scale, 'text', { x: 5, y: 7 }, 'dB');
add(scale, 'text', { x: 5, y: '50%', dy: 2 }, '-∞');
[1, -1].forEach(sign => {
  labels.forEach(db => {
    const f = level(db, sign);
    gridLine(0, f * 394, 2105, f * 394);
    const y = (f * 100) + '%';
    add(scale, 'line', { x1: 0, x2: 3, y1: y, y2: y, stroke: '#777' });
    add(scale, 'text', { x: 5, y, dy: 2 }, String(db));
  });
  for (let db = -0.5; db > -30; db -= db > -6 ? 0.5 : 1) {
    const y = (level(db, sign) * 100) + '%';
    add(scale, 'line', { x1: 0, x2: 2, y1: y, y2: y, stroke: '#555' });
  }
});

// three tone bursts with silence between them
add(wave, 'path', { d: 'M0 197H2105', stroke: '#2c5040', 'vector-effect': 'non-scaling-stroke' });
[5, 800, 1595].forEach(t => {
  add(wave, 'path', { d: `M${t} 183.500h476l24 13.500-24 13.500h-476z`, fill: '#45dc98' });
});

// level meter scale, 60 dB wide with a little room on the right
const levels = document.getElementById('levels');
for (let db = -60; db <= 0; db++) {
  const x = ((db + 60) / 60 * 99) + '%';
  const major = db % 3 === 0;
  add(levels, 'line', { x1: x, x2: x, y1: 0, y2: major ? 3 : 1, stroke: '#686868' });
  if (major) add(levels, 'text', { x, y: 9, 'text-anchor': db === -60 ? 'start' : 'middle' }, db === -60 ? 'dB' : String(db));
}
```
